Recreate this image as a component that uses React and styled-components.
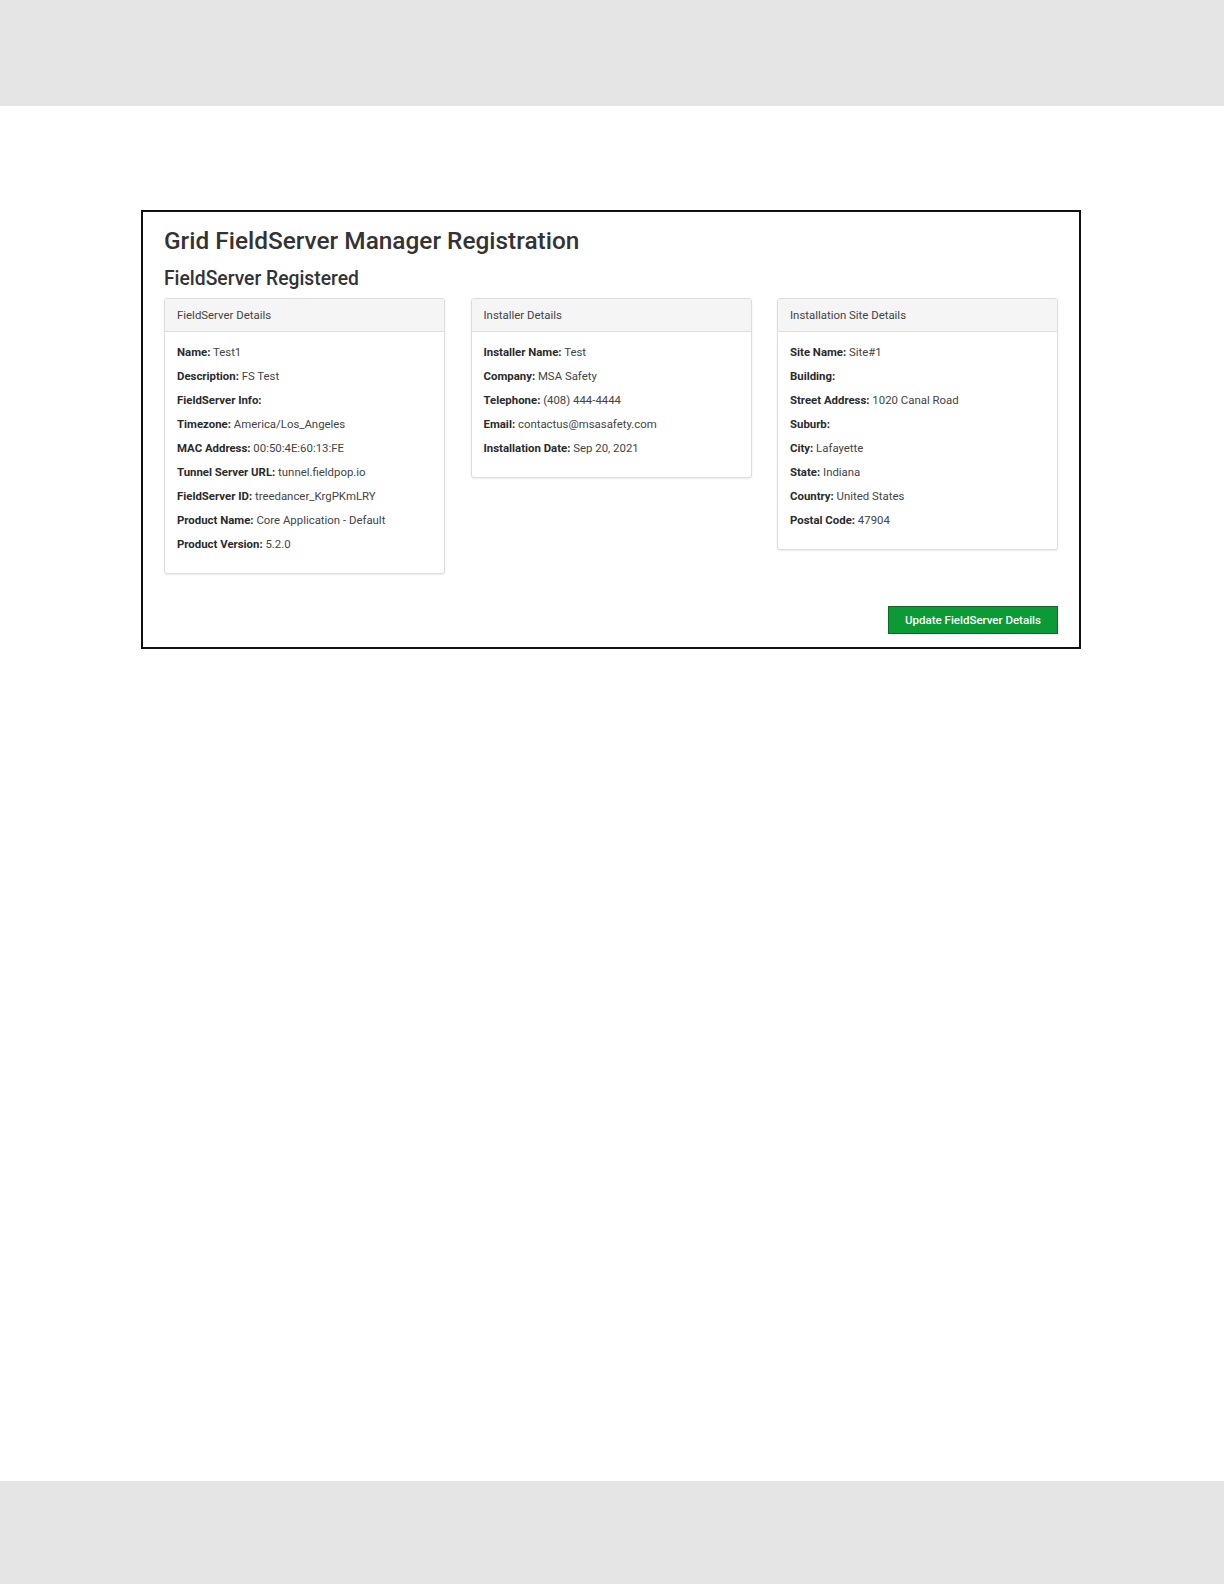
import React from "react";
import styled, { createGlobalStyle } from "styled-components";

const Global = createGlobalStyle`
  html, body { margin: 0; padding: 0; background: #fff; }
  body { font-family: Roboto, "Noto Sans", Arial, sans-serif; color: #333; }
  * { box-sizing: border-box; }
`;

const Page = styled.div`
  display: flex;
  flex-direction: column;
  min-height: 1584px;
`;

const Band = styled.div`
  height: ${(p) => p.$h}px;
  background: #e5e5e5;
  flex: none;
`;

const Main = styled.main`
  flex: 1;
  padding: 104px 143px 0 141px;
`;

const Frame = styled.section`
  width: 940px;
  border: 2px solid #111;
  padding: 14px 21px 13px;
  display: flex;
  flex-direction: column;
`;

const Title = styled.h1`
  margin: 0;
  font-size: 24.4px;
  font-weight: 500;
  line-height: 30px;
  color: #333;
`;

const Subtitle = styled.h2`
  margin: 11px 0 0;
  font-size: 19.3px;
  font-weight: 500;
  line-height: 24px;
  color: #333;
`;

const Grid = styled.div`
  display: grid;
  grid-template-columns: repeat(3, 1fr);
  gap: 25.5px;
  align-items: start;
  margin-top: 7px;
`;

const Card = styled.div`
  border: 1px solid #ddd;
  border-radius: 3px;
  background: #fff;
  box-shadow: 0 1px 2px rgba(0, 0, 0, 0.08);
  overflow: hidden;
`;

const CardHeader = styled.div`
  height: 33px;
  display: flex;
  align-items: center;
  padding: 0 12px;
  background: #f5f5f5;
  border-bottom: 1px solid #ddd;
  font-size: 11.4px;
  color: #444;
`;

const CardBody = styled.div`
  padding: 8px 12px 17px;
`;

const Row = styled.div`
  line-height: 24px;
  font-size: 11.4px;
  color: #444;
  white-space: nowrap;
`;

const Label = styled.span`
  font-weight: 700;
  color: #2b2b2b;
`;

const Footer = styled.div`
  display: flex;
  justify-content: flex-end;
  margin-top: 32px;
`;

const Button = styled.button`
  width: 170px;
  height: 28px;
  border: 1px solid #0c6a27;
  background: #0b9a35;
  color: #fff;
  font-family: Roboto, Arial, sans-serif;
  font-size: 11.5px;
  font-weight: 500;
  padding: 0;
  cursor: pointer;
`;

const cards = [
  {
    title: "FieldServer Details",
    rows: [
      ["Name", "Test1"],
      ["Description", "FS Test"],
      ["FieldServer Info", ""],
      ["Timezone", "America/Los_Angeles"],
      ["MAC Address", "00:50:4E:60:13:FE"],
      ["Tunnel Server URL", "tunnel.fieldpop.io"],
      ["FieldServer ID", "treedancer_KrgPKmLRY"],
      ["Product Name", "Core Application - Default"],
      ["Product Version", "5.2.0"],
    ],
  },
  {
    title: "Installer Details",
    rows: [
      ["Installer Name", "Test"],
      ["Company", "MSA Safety"],
      ["Telephone", "(408) 444-4444"],
      ["Email", "contactus@msasafety.com"],
      ["Installation Date", "Sep 20, 2021"],
    ],
  },
  {
    title: "Installation Site Details",
    rows: [
      ["Site Name", "Site#1"],
      ["Building", ""],
      ["Street Address", "1020 Canal Road"],
      ["Suburb", ""],
      ["City", "Lafayette"],
      ["State", "Indiana"],
      ["Country", "United States"],
      ["Postal Code", "47904"],
    ],
  },
];

export default function App() {
  return (
    <Page>
      <Global />
      <Band $h={106} />
      <Main>
        <Frame>
          <Title>Grid FieldServer Manager Registration</Title>
          <Subtitle>FieldServer Registered</Subtitle>
          <Grid>
            {cards.map((c) => (
              <Card key={c.title}>
                <CardHeader>{c.title}</CardHeader>
                <CardBody>
                  {c.rows.map(([k, v]) => (
                    <Row key={k}>
                      <Label>{k}:</Label>
                      {v ? ` ${v}` : ""}
                    </Row>
                  ))}
                </CardBody>
              </Card>
            ))}
          </Grid>
          <Footer>
            <Button>Update FieldServer Details</Button>
          </Footer>
        </Frame>
      </Main>
      <Band $h={103} />
    </Page>
  );
}
